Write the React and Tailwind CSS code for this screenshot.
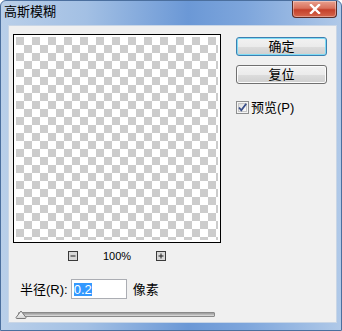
import React from "react";

const ui = "font-['Liberation_Sans','Noto_Sans_CJK_SC',sans-serif]";

function CloseButton() {
    return (
        <div className="mr-[4px] w-[45px] h-[17px] rounded-b-[4px] border border-t-0 border-[#5a2c27] bg-[linear-gradient(180deg,#e8a08f_0%,#d9715c_45%,#c4402a_55%,#d4664c_100%)] flex items-center justify-center shadow-[inset_0_0_0_1px_rgba(255,255,255,0.35)]">
            <svg width="12" height="10" viewBox="0 0 12 10">
                <path
                    d="M2 1 L10 9 M10 1 L2 9"
                    stroke="#ffffff"
                    strokeWidth="2.4"
                    strokeLinecap="square"
                />
            </svg>
        </div>
    );
}

function TitleBar() {
    return (
        <div className="h-[24px] flex items-start justify-between">
            <div className={`${ui} text-[13px] leading-[13px] text-black mt-[4px] ml-[3px]`}>
                高斯模糊
            </div>
            <CloseButton />
        </div>
    );
}

function ZoomBox({ plus }) {
    return (
        <svg width="10" height="10" viewBox="0 0 10 10">
            <rect x="0.5" y="0.5" width="9" height="9" fill="#d8d8d8" stroke="#3a3a3a" />
            <path d="M2.5 5 H7.5" stroke="#202020" strokeWidth="1" />
            {plus && <path d="M5 2.5 V7.5" stroke="#202020" strokeWidth="1" />}
        </svg>
    );
}

function Preview() {
    return (
        <div className="w-[208px] h-[209px] border border-black bg-white p-[2px]">
            <div className="w-full h-full bg-[conic-gradient(#ffffff_25%,#cccccc_0_50%,#ffffff_0_75%,#cccccc_0)] [background-size:16px_16px]"></div>
        </div>
    );
}

function Slider() {
    return (
        <div className="relative w-[200px] h-[14px] ml-[2px]">
            <div className="absolute left-[3px] right-0 top-[5px] h-[5px] rounded-[1px] border border-[#8a8a8a] bg-[linear-gradient(180deg,#9a9a9a_0%,#b8b8b8_50%,#e2e2e2_100%)]"></div>
            <svg className="absolute left-0 top-[1px]" width="12" height="11" viewBox="0 0 12 11">
                <defs>
                    <linearGradient id="thumb" x1="0" y1="0" x2="0" y2="1">
                        <stop offset="0" stopColor="#ffffff" />
                        <stop offset="1" stopColor="#d6d6d6" />
                    </linearGradient>
                </defs>
                <path
                    d="M1 9.5 L6 3 L11 9.5 Q11 10.5 10 10.5 H2 Q1 10.5 1 9.5 Z"
                    fill="url(#thumb)"
                    stroke="#7a7a7a"
                />
            </svg>
        </div>
    );
}

function WinButton({ label, primary }) {
    return (
        <div
            className={`w-[91px] h-[19px] rounded-[3px] border flex items-center justify-center ${ui} text-[13px] leading-[13px] text-black ${
                primary
                    ? "border-[#3c7fb1] shadow-[inset_0_0_0_1px_#7fdcf5] bg-[linear-gradient(180deg,#f2f2f2_0%,#ebebeb_50%,#dddddd_51%,#cfcfcf_100%)]"
                    : "border-[#707070] shadow-[inset_0_0_0_1px_#fcfcfc] bg-[linear-gradient(180deg,#f2f2f2_0%,#ebebeb_50%,#dddddd_51%,#cfcfcf_100%)]"
            }`}
        >
            {label}
        </div>
    );
}

function PreviewCheck() {
    return (
        <div className="flex items-center gap-[2px]">
            <svg width="13" height="13" viewBox="0 0 13 13">
                <defs>
                    <linearGradient id="chk" x1="0" y1="0" x2="1" y2="1">
                        <stop offset="0" stopColor="#dcdcdc" />
                        <stop offset="1" stopColor="#ffffff" />
                    </linearGradient>
                </defs>
                <rect x="0.5" y="0.5" width="12" height="12" fill="#f4f4f4" stroke="#8e8f8f" />
                <rect x="2.5" y="2.5" width="8" height="8" fill="url(#chk)" stroke="#c8c8c8" />
                <path
                    d="M3 6.5 L5.3 9.3 L10.2 2.8"
                    fill="none"
                    stroke="#3a4f8a"
                    strokeWidth="1.8"
                />
            </svg>
            <span className={`${ui} text-[13px] leading-[13px] text-black`}>预览(P)</span>
        </div>
    );
}

function App() {
    return (
        <div className="w-[342px] h-[331px] overflow-hidden rounded-t-[6px] border border-[#4b6f9e] bg-[linear-gradient(90deg,#b9cfe9_0%,#a3c0e4_25%,#6b98d6_55%,#7ea6dc_72%,#b0c9e8_100%)]">
            <TitleBar />
            <div className="ml-[7px] mr-[4px] h-[298px] bg-[#f0f0f0] border border-[#c9d6e6] flex">
                <div className="flex flex-col pl-[4px] pt-[8px]">
                    <Preview />
                    <div className="w-[208px] flex items-center justify-center mt-[8px] h-[10px]">
                        <ZoomBox />
                        <span className={`${ui} text-[11px] leading-[11px] text-black mx-[25px]`}>100%</span>
                        <ZoomBox plus />
                    </div>
                    <div className="flex items-center mt-[18px] pl-[7px] h-[20px]">
                        <span className={`${ui} text-[13px] leading-[13px] text-black`}>半径(R):</span>
                        <div className="ml-[3px] w-[56px] h-[20px] border border-[#abadb3] bg-white flex items-center pl-[2px]">
                            <span className={`${ui} text-[13px] leading-[13px] bg-[#3399ff] text-white`}>0.2</span>
                        </div>
                        <span className={`${ui} text-[13px] leading-[13px] text-black ml-[6px]`}>像素</span>
                    </div>
                    <div className="mt-[8px]">
                        <Slider />
                    </div>
                </div>
                <div className="flex flex-col pl-[15px] pt-[11px]">
                    <WinButton label="确定" primary />
                    <div className="h-[9px]"></div>
                    <WinButton label="复位" />
                    <div className="mt-[17px]">
                        <PreviewCheck />
                    </div>
                </div>
            </div>
        </div>
    );
}

export default App;
